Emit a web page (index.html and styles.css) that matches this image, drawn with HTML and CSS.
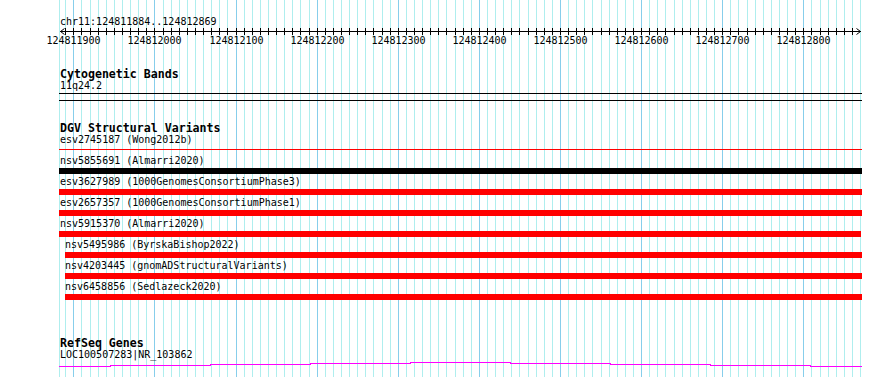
FILE: index.html
```html
<!DOCTYPE html>
<html lang="en">
<head>
    <meta charset="UTF-8">
    <meta name="viewport" content="width=device-width, initial-scale=1.0">
    <title>chr11:124811884..124812869</title>
    <link rel="stylesheet" href="styles.css">
</head>
<body>
    <div class="panel">
        <svg class="grid" id="grid" width="890" height="377"></svg>

        <div class="track ruler">
            <div class="chrom">chr11:124811884..124812869</div>
            <svg class="scale" id="scale" width="890" height="20"></svg>
        </div>

        <div class="track cyto">
            <div class="track-title">Cytogenetic Bands</div>
            <div class="feat-label">11q24.2</div>
            <div class="band"></div>
        </div>

        <div class="track dgv">
            <div class="track-title">DGV Structural Variants</div>
            <div class="row">
                <div class="feat-label">esv2745187 (Wong2012b)</div>
                <div class="bar thin"></div>
            </div>
            <div class="row">
                <div class="feat-label">nsv5855691 (Almarri2020)</div>
                <div class="bar black"></div>
            </div>
            <div class="row">
                <div class="feat-label">esv3627989 (1000GenomesConsortiumPhase3)</div>
                <div class="bar"></div>
            </div>
            <div class="row">
                <div class="feat-label">esv2657357 (1000GenomesConsortiumPhase1)</div>
                <div class="bar"></div>
            </div>
            <div class="row">
                <div class="feat-label">nsv5915370 (Almarri2020)</div>
                <div class="bar" style="width: 802px"></div>
            </div>
            <div class="row indent">
                <div class="feat-label">nsv5495986 (ByrskaBishop2022)</div>
                <div class="bar"></div>
            </div>
            <div class="row indent">
                <div class="feat-label">nsv4203445 (gnomADStructuralVariants)</div>
                <div class="bar"></div>
            </div>
            <div class="row indent">
                <div class="feat-label">nsv6458856 (Sedlazeck2020)</div>
                <div class="bar"></div>
            </div>
        </div>

        <div class="track refseq">
            <div class="track-title">RefSeq Genes</div>
            <div class="feat-label">LOC100507283|NR_103862</div>
            <svg class="gene" width="890" height="10">
                <polyline points="59,6.5 110,6.5 110,5.5 210,5.5 210,4.5 310,4.5 310,3.5 410,3.5 410,2.5 510,2.5 510,3.5 610,3.5 610,4.5 710,4.5 710,5.5 810,5.5 810,6.5 862,6.5" />
            </svg>
        </div>
    </div>

    <script>
        const NS = 'http://www.w3.org/2000/svg';
        const grid = document.getElementById('grid');
        const scale = document.getElementById('scale');

        // pixel column of the k-th 10bp step from 124811900
        function px(k) {
            return Math.round(73.3 + 8.111 * k);
        }

        function addRect(svg, x, y, w, h, fill) {
            const r = document.createElementNS(NS, 'rect');
            r.setAttribute('x', x);
            r.setAttribute('y', y);
            r.setAttribute('width', w);
            r.setAttribute('height', h);
            r.setAttribute('fill', fill);
            svg.appendChild(r);
        }

        // grid lines behind the tracks
        addRect(grid, 59, 0, 1, 377, '#afeeee');
        for (let k = -1; k <= 97; k++) {
            addRect(grid, px(k), 0, 1, 377, k % 10 === 0 ? '#87ceeb' : '#afeeee');
        }

        // ruler: base line, ticks, arrows and labels
        addRect(scale, 60, 3, 801, 1, '#000');
        for (let k = -1; k <= 96; k++) {
            addRect(scale, px(k), 0, 1, 7, '#000');
        }

        const arrows = document.createElementNS(NS, 'path');
        arrows.setAttribute('d', 'M64.5,0.5 L60.5,3.5 L64.5,6.5 M856.5,0.5 L860.5,3.5 L856.5,6.5');
        arrows.setAttribute('class', 'arrow');
        scale.appendChild(arrows);

        for (let k = 0; k <= 90; k += 10) {
            const t = document.createElementNS(NS, 'text');
            t.setAttribute('x', px(k) + 0.5);
            t.setAttribute('y', 16);
            t.setAttribute('text-anchor', 'middle');
            t.textContent = 124811900 + k * 10;
            scale.appendChild(t);
        }
    </script>
</body>
</html>
```

FILE: styles.css
```css
body {
    margin: 0;
    padding: 0;
    background-color: #fff;
    font-family: "DejaVu Sans Mono", "Liberation Mono", monospace;
    color: #000;
}

.panel {
    position: relative;
    width: 890px;
    height: 377px;
    overflow: hidden;
    background-color: #fff;
}

.grid {
    position: absolute;
    top: 0;
    left: 0;
    shape-rendering: crispEdges;
}

.track {
    position: relative;
}

.ruler {
    padding-top: 15px;
}

.chrom {
    margin-left: 60px;
    font-size: 10px;
    line-height: 13px;
}

.scale {
    display: block;
    shape-rendering: crispEdges;
}

.scale text {
    font-family: "DejaVu Sans Mono", monospace;
    font-size: 10px;
    fill: #000;
}

.scale .arrow {
    fill: none;
    stroke: #000;
    stroke-width: 1;
    shape-rendering: auto;
}

.track-title {
    margin-left: 60px;
    font-size: 11.6px;
    font-weight: bold;
    line-height: 12px;
}

.feat-label {
    margin-left: 60px;
    font-size: 10px;
    line-height: 11px;
    white-space: nowrap;
}

.cyto {
    margin-top: 20px;
}

.band {
    box-sizing: border-box;
    margin-top: 2px;
    margin-left: 59px;
    width: 803px;
    height: 8px;
    border-top: 1px solid #000;
    border-bottom: 1px solid #000;
}

.dgv {
    margin-top: 21px;
}

.row {
    padding-bottom: 2px;
}

.row .feat-label {
    margin-bottom: 2px;
}

.bar {
    margin-left: 59px;
    width: 803px;
    height: 6px;
    background-color: #f00;
}

.bar.black {
    background-color: #000;
}

.bar.thin {
    background: linear-gradient(#f00, #f00) 0 2px / 100% 1px no-repeat;
}

.row.indent .feat-label {
    margin-left: 65px;
}

.row.indent .bar {
    margin-left: 65px;
    width: 797px;
}

.refseq {
    margin-top: 35px;
}

.gene {
    display: block;
    shape-rendering: crispEdges;
}

.gene polyline {
    fill: none;
    stroke: #f0f;
    stroke-width: 1;
}
```
